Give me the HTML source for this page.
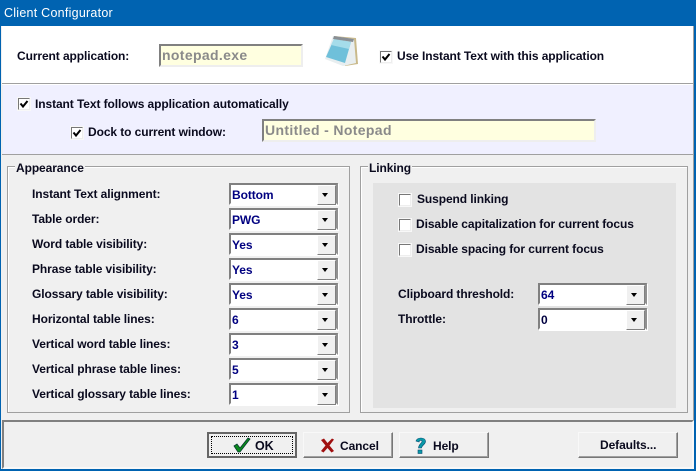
<!DOCTYPE html>
<html><head><meta charset="utf-8"><style>
html,body{margin:0;padding:0}
body{width:696px;height:471px;overflow:hidden;position:relative;background:#f0f0f0;font:bold 12px "Liberation Sans",sans-serif;color:#0a0a1e;letter-spacing:-.09px}
div,span{position:absolute;box-sizing:border-box;white-space:nowrap}
.t{line-height:14px;height:14px}
.cb{width:12px;height:12px;background:#fff;border:1px solid;border-color:#777 #eee #eee #777;box-shadow:0 0 0 1px #f8f8f8}
.cb svg{position:absolute;left:0;top:0}
.c{left:229px;width:109px;height:22px;background:#fff;border:2px solid;border-color:#808080 #909090 #fff #808080;box-shadow:1px 1px 0 #fff;color:#000080;font-size:12px;line-height:18px;padding:1px 0 0 1px}
.c i{position:absolute;right:0;top:0;width:17px;height:18px;background:#f0f0f0;border:1px solid;border-color:#fff #808080 #808080 #fff}
.c i:after{content:"";position:absolute;left:4px;top:7px;border:3.5px solid transparent;border-top:4px solid #000;border-bottom:0}
.b{top:432px;height:26px;background:#f0f0f0;border:1px solid;border-color:#f8f8f8 #777 #777 #f8f8f8;box-shadow:inset -1px -1px 0 #a0a0a0}
.e{background:#ffffe0;border:2px solid;border-color:#808080 #eee #eee #808080;color:#8a8a8a;font-size:14px;letter-spacing:.35px;line-height:18px;padding-left:1px}
</style></head><body>
<div style="left:0;top:0;width:696px;height:471px;border:2px solid #0063b1;border-top:0;border-left-width:1.5px"></div>
<div style="left:0;top:0;width:696px;height:26px;background:#0063b1"></div>
<div class="t" style="left:4px;top:6px;color:#fff;font-weight:normal;font-size:12.5px;letter-spacing:.25px">Client Configurator</div>

<div style="left:2px;top:26px;width:692px;height:57px;background:#fff"></div>
<div style="left:2px;top:83px;width:692px;height:1px;background:#a0a0a0"></div>
<div style="left:2px;top:84px;width:692px;height:1px;background:#fff"></div>
<div style="left:3px;top:85px;width:691px;height:69px;background:#f0f0ff"></div>
<div style="left:2px;top:154px;width:692px;height:1px;background:#a0a0a0"></div>
<div style="left:693px;top:26px;width:1px;height:394px;background:#a0a0a0"></div>

<div class="t" style="left:17px;top:49px">Current application:</div>
<div class="e" style="left:159px;top:44px;width:144px;height:23px">notepad.exe</div>
<svg style="position:absolute;left:323px;top:35px" width="36" height="32" viewBox="0 0 36 32">
<path d="M11 1 L33 3 L35 29 L22 31 Z" fill="#c9b98a"/>
<path d="M10 1 L31 4 L33 28 L20 31 L2 24 Z" fill="#e8eef0"/>
<path d="M11 4 L28 7 L22 28 L3 22 Z" fill="#6fc0da"/>
<path d="M11 4 L28 7 L26 14 L8 10 Z" fill="#a5dcea"/>
<path d="M11 1 L31 4 L30 7 L10 4 Z" fill="#8a8f94"/>
</svg>
<div class="cb" style="left:380px;top:51px"><svg width="10" height="10" viewBox="0 0 10 10"><path d="M1.500 4.500 L4 7.500 L8.500 2" fill="none" stroke="#000" stroke-width="2"/></svg></div>
<div class="t" style="left:397px;top:49px">Use Instant Text with this application</div>

<div class="cb" style="left:18px;top:98px"><svg width="10" height="10" viewBox="0 0 10 10"><path d="M1.500 4.500 L4 7.500 L8.500 2" fill="none" stroke="#000" stroke-width="2"/></svg></div>
<div class="t" style="left:35px;top:97px">Instant Text follows application automatically</div>
<div class="cb" style="left:71px;top:127px"><svg width="10" height="10" viewBox="0 0 10 10"><path d="M1.500 4.500 L4 7.500 L8.500 2" fill="none" stroke="#000" stroke-width="2"/></svg></div>
<div class="t" style="left:88px;top:125px">Dock to current window:</div>
<div class="e" style="left:262px;top:119px;width:334px;height:23px">Untitled - Notepad</div>

<div style="left:7px;top:166px;width:343px;height:247px;border:1px solid #a0a0a0;box-shadow:inset 1px 1px 0 #fff"></div>
<div class="t" style="left:15px;top:161px;background:#f0f0f0;padding:0 1px">Appearance</div>
<div class="t" style="left:32px;top:187px">Instant Text alignment:</div>
<div class="t" style="left:32px;top:212px">Table order:</div>
<div class="t" style="left:32px;top:237px">Word table visibility:</div>
<div class="t" style="left:32px;top:262px">Phrase table visibility:</div>
<div class="t" style="left:32px;top:287px">Glossary table visibility:</div>
<div class="t" style="left:32px;top:312px">Horizontal table lines:</div>
<div class="t" style="left:32px;top:337px">Vertical word table lines:</div>
<div class="t" style="left:32px;top:362px">Vertical phrase table lines:</div>
<div class="t" style="left:32px;top:387px">Vertical glossary table lines:</div>
<div class="c" style="top:183px">Bottom<i></i></div>
<div class="c" style="top:208px">PWG<i></i></div>
<div class="c" style="top:233px">Yes<i></i></div>
<div class="c" style="top:258px">Yes<i></i></div>
<div class="c" style="top:283px">Yes<i></i></div>
<div class="c" style="top:308px">6<i></i></div>
<div class="c" style="top:333px">3<i></i></div>
<div class="c" style="top:358px">5<i></i></div>
<div class="c" style="top:383px">1<i></i></div>

<div style="left:360px;top:166px;width:328px;height:247px;border:1px solid #a0a0a0;box-shadow:inset 1px 1px 0 #fff"></div>
<div class="t" style="left:368px;top:161px;background:#f0f0f0;padding:0 1px">Linking</div>
<div style="left:373px;top:183px;width:303px;height:225px;background:#e3e3e3"></div>
<div class="cb" style="left:399px;top:194px"></div>
<div class="t" style="left:417px;top:192px">Suspend linking</div>
<div class="cb" style="left:399px;top:219px"></div>
<div class="t" style="left:416px;top:217px">Disable capitalization for current focus</div>
<div class="cb" style="left:399px;top:244px"></div>
<div class="t" style="left:416px;top:242px">Disable spacing for current focus</div>
<div class="t" style="left:398px;top:287px">Clipboard threshold:</div>
<div class="t" style="left:398px;top:312px">Throttle:</div>
<div class="c" style="left:538px;top:283px">64<i></i></div>
<div class="c" style="left:538px;top:308px;color:#000040">0<i></i></div>

<div style="left:2px;top:420px;width:692px;height:49px;border:2px solid;border-color:#808080 #f8f8f8 #f8f8f8 #808080"></div>

<div class="b" style="left:207px;width:90px;height:26px;border:2px solid #666;box-shadow:none"></div>
<div style="left:211px;top:436px;width:82px;height:18px;border:1px dotted #000"></div>
<svg style="position:absolute;left:233px;top:437px" width="18" height="16" viewBox="0 0 18 16"><path d="M1 9 L4 7 L7 11 L15 1 L17 2 L7 15 L5 15 Z" fill="#0a8a1c" stroke="#063a30" stroke-width=".8"/></svg>
<div class="t" style="left:255px;top:439px;font-size:12.5px">OK</div>

<div class="b" style="left:303px;width:90px"></div>
<svg style="position:absolute;left:320px;top:438px" width="15" height="15" viewBox="0 0 15 15"><path d="M1 2 L4 0.5 L7.500 5 L12 0.5 L14 1.500 L9.500 7.500 L14 13 L11.500 14.500 L7.500 10 L3.500 14.500 L1 13 L5.500 7.500 Z" fill="#a01010"/></svg>
<div class="t" style="left:340px;top:439px">Cancel</div>

<div class="b" style="left:399px;width:90px"></div>
<svg style="position:absolute;left:414px;top:437px" width="13" height="17" viewBox="0 0 13 17"><path d="M2 4 C3 0 11 0 11.500 4 C12 7 8 8 7.500 11 L4.500 11 C4.500 7 8.500 6 8 4 C7.500 3 5.500 3 5 5 Z" fill="#0a9aa8" stroke="#064a70" stroke-width=".6"/><rect x="4" y="13" width="4" height="3.500" fill="#0a9aa8" stroke="#064a70" stroke-width=".6"/></svg>
<div class="t" style="left:433px;top:439px">Help</div>

<div class="b" style="left:578px;width:100px"></div>
<div class="t" style="left:600px;top:438px">Defaults...</div>
</body></html>
